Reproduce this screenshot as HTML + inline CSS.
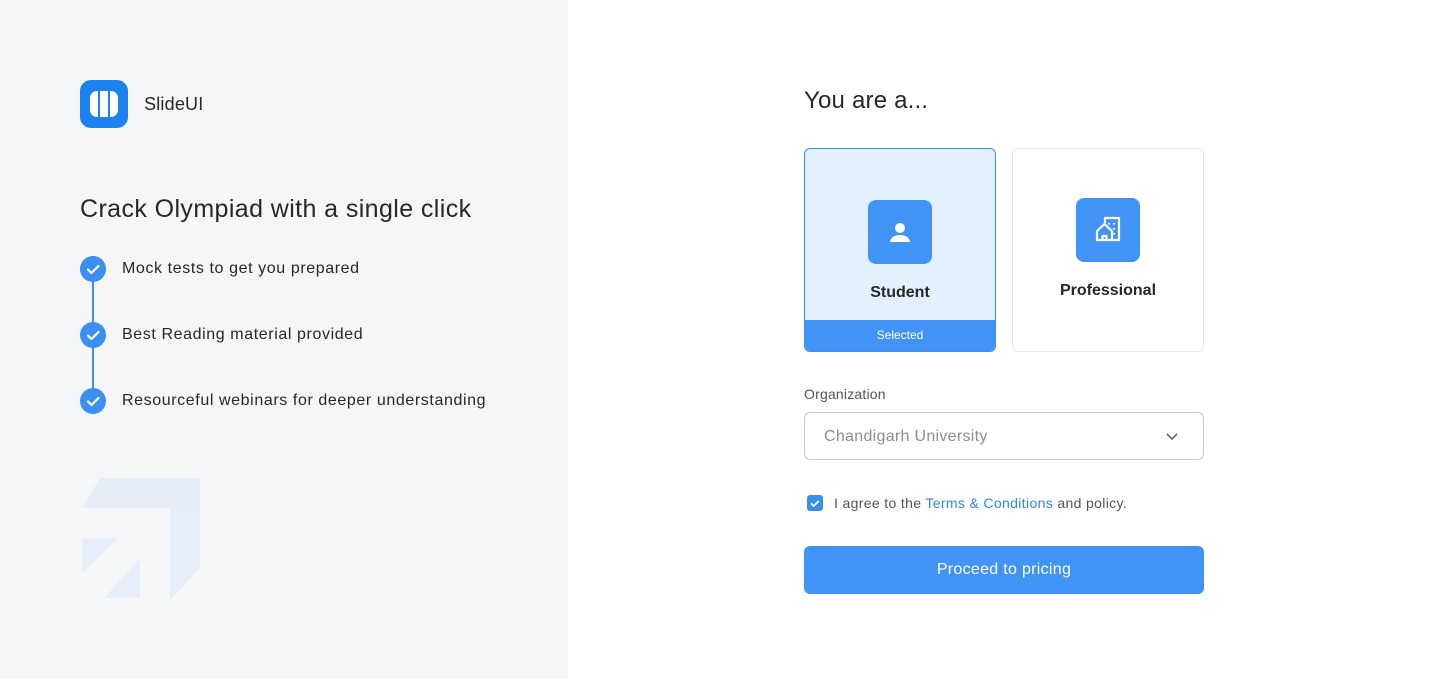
<!DOCTYPE html>
<html><head><meta charset="utf-8"><style>
*{margin:0;padding:0;box-sizing:border-box}
body{width:1440px;height:679px;font-family:"Liberation Sans",sans-serif;background:#fff;position:relative;overflow:hidden;color:#27272a}
.left{position:absolute;left:0;top:0;width:568px;height:679px;background:#f5f6f8}
.abs{position:absolute}
.chk{position:absolute;left:80px;width:26px;height:26px;border-radius:50%;background:#3b8ff0}
.item{position:absolute;left:122px;font-size:16px;color:#27272a;letter-spacing:0.6px}
.card{position:absolute;top:148px;width:192px;height:204px;border-radius:6px;overflow:hidden}
.ib{position:absolute;width:64px;height:64px;border-radius:8px;background:#4194f5}
</style></head><body>
<div class="left">
 <svg class="abs" style="left:80px;top:80px" width="48" height="48" viewBox="0 0 48 48">
  <rect width="48" height="48" rx="11" fill="#1b82ef"/>
  <path d="M10 18a7 7 0 0 1 7-7h1v26h-1a7 7 0 0 1-7-7z" fill="#fff"/>
  <rect x="20" y="11" width="8" height="26" fill="#fff"/>
  <path d="M30 11h1a7 7 0 0 1 7 7v12a7 7 0 0 1-7 7h-1z" fill="#fff"/>
 </svg>
 <div class="abs" style="left:144px;top:94px;font-size:18px;letter-spacing:0.2px">SlideUI</div>
 <div class="abs" style="left:80px;top:195px;font-size:25px;color:#27272a;letter-spacing:0.4px">Crack Olympiad with a single click</div>
 <div class="abs" style="left:92px;top:270px;width:2px;height:132px;background:#3b8ff0"></div>
 <div class="chk" style="top:256px"><svg width="26" height="26"><path d="M8 13.5l3.5 3.5 7-7" stroke="#fff" stroke-width="2.2" fill="none" stroke-linecap="round" stroke-linejoin="round"/></svg></div>
 <div class="chk" style="top:322px"><svg width="26" height="26"><path d="M8 13.5l3.5 3.5 7-7" stroke="#fff" stroke-width="2.2" fill="none" stroke-linecap="round" stroke-linejoin="round"/></svg></div>
 <div class="chk" style="top:388px"><svg width="26" height="26"><path d="M8 13.5l3.5 3.5 7-7" stroke="#fff" stroke-width="2.2" fill="none" stroke-linecap="round" stroke-linejoin="round"/></svg></div>
 <div class="item" style="top:260px">Mock tests to get you prepared</div>
 <div class="item" style="top:326px">Best Reading material provided</div>
 <div class="item" style="top:392px">Resourceful webinars for deeper understanding</div>
 <svg class="abs" style="left:78px;top:476px" width="124" height="124" viewBox="0 0 124 124">
  <path d="M22 2h100v30H4z" fill="#e6edf9"/>
  <path d="M92 32h30v60l-30 32z" fill="#e8eef9"/>
  <path d="M4 62h36L4 98z" fill="#e8eef9"/>
  <path d="M62 82v40H26z" fill="#e8eef9"/>
 </svg>
</div>
<div class="abs" style="left:804px;top:87px;font-size:24px;letter-spacing:0.2px">You are a...</div>
<div class="card" style="left:804px;background:#e3f1fe;border:1px solid #3b8ff0">
 <div class="ib" style="left:63px;top:51px"><svg width="64" height="64"><circle cx="32" cy="28" r="5" fill="#fff"/><path d="M22 42a10 7 0 0 1 20 0z" fill="#fff"/></svg></div>
 <div class="abs" style="left:0;width:190px;top:135px;text-align:center;font-size:16px;font-weight:700">Student</div>
 <div class="abs" style="left:0;bottom:0;width:190px;height:31px;background:#4194f5;color:#fff;font-size:12px;text-align:center;line-height:31px">Selected</div>
</div>
<div class="card" style="left:1012px;border:1px solid #e5e7eb">
 <div class="ib" style="left:63px;top:49px"><svg width="64" height="64" fill="none" stroke="#fff" stroke-width="2.2" stroke-linejoin="round"><path d="M29 25v-5h14v22h-7"/><path d="M21 42v-9l7.5-7 7.5 7v9z"/><path d="M26.5 42v-4h4v4"/><path d="M38 25v1.5M38 30v1.5M38 35v1.5M33 25v1.5"/></svg></div>
 <div class="abs" style="left:0;width:190px;top:133px;text-align:center;font-size:16px;font-weight:700">Professional</div>
</div>
<div class="abs" style="left:804px;top:386px;font-size:14px;color:#52525b;letter-spacing:0.2px">Organization</div>
<div class="abs" style="left:804px;top:412px;width:400px;height:48px;border:1px solid #c4c7cc;border-radius:6px">
 <div class="abs" style="left:19px;top:15px;font-size:16px;color:#8a8d93;letter-spacing:0.3px">Chandigarh University</div>
 <svg class="abs" style="left:360px;top:17px" width="14" height="14"><path d="M2 4l5 5 5-5" stroke="#52525b" stroke-width="1.5" fill="none"/></svg>
</div>
<div class="abs" style="left:807px;top:495px;width:16px;height:16px;border-radius:3px;background:#3b8ff0"><svg width="16" height="16"><path d="M4 8.3l2.7 2.7 5-5" stroke="#fff" stroke-width="1.8" fill="none"/></svg></div>
<div class="abs" style="left:834px;top:495px;font-size:14px;color:#52525b;letter-spacing:0.35px">I agree to the <span style="color:#2f86e9">Terms &amp; Conditions</span> and policy.</div>
<div class="abs" style="left:804px;top:546px;width:400px;height:48px;border-radius:6px;background:#4194f5;color:#fff;font-size:16px;text-align:center;line-height:48px;letter-spacing:0.3px">Proceed to pricing</div>
</body></html>
